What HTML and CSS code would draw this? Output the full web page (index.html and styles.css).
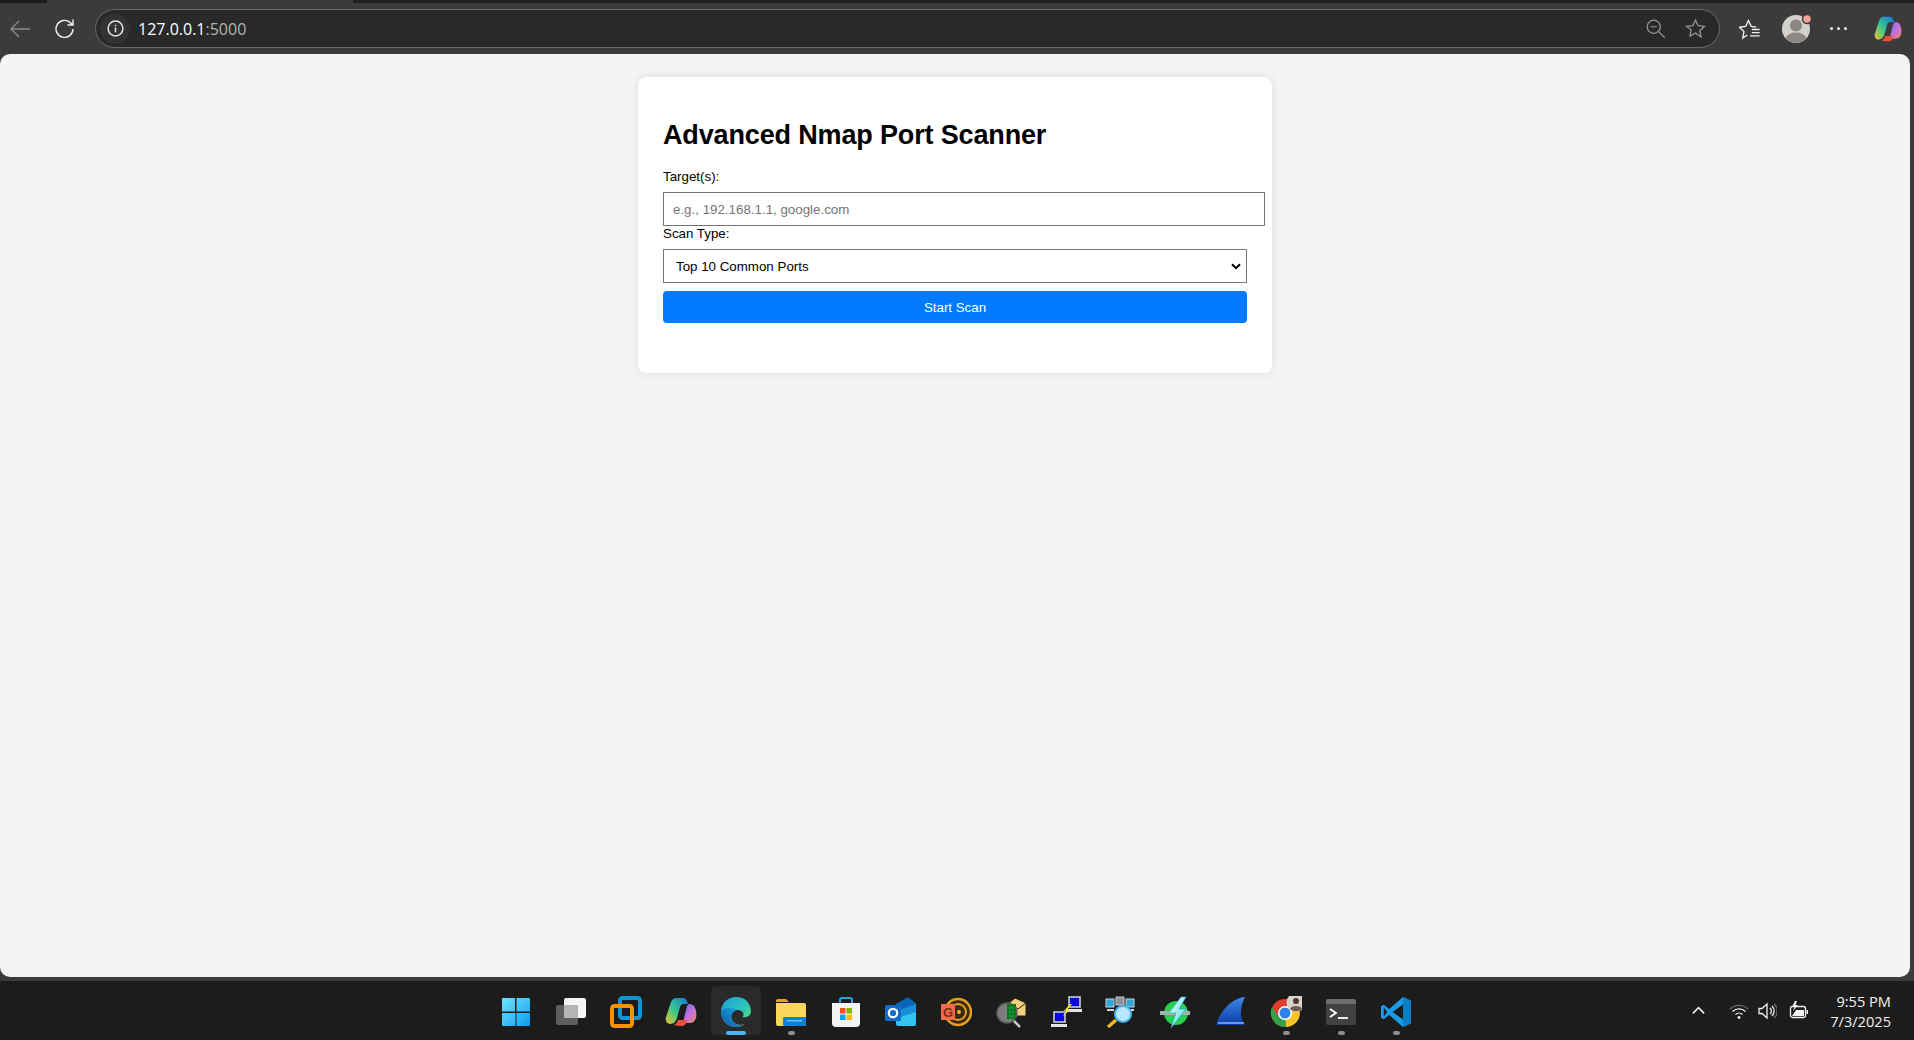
FILE: index.html
```html
<!DOCTYPE html>
<html lang="en">
<head>
  <meta charset="UTF-8">
  <title>Advanced Nmap Port Scanner</title>
  <link rel="stylesheet" href="styles.css">
</head>
<body>

  <div class="tabstrip"><div class="tab-edge"></div><div class="tab-active"></div></div>

  <div class="toolbar">
    <svg class="nav-icon back" viewBox="0 0 24 24"><path d="M22 12H3M11 4l-8 8 8 8"/></svg>
    <svg class="nav-icon reload" viewBox="0 0 24 24"><path d="M20 12a8.5 8.5 0 1 1-3-6.6L20 8M20 2.5V8h-5.5"/></svg>

    <div class="addressbar">
      <div class="info-pill">
        <svg class="info-icon" viewBox="0 0 20 20"><circle cx="10" cy="10" r="7.8"/><path d="M10 9v5M10 6v1.6"/></svg>
      </div>
      <span class="url"><span class="host">127.0.0.1</span>:5000</span>
      <svg class="bar-icon zoom-out" viewBox="0 0 24 24"><circle cx="10" cy="10" r="7.5"/><path d="M6.5 10h7M15.5 15.5l7 7"/></svg>
      <svg class="bar-icon star" viewBox="0 0 24 24"><path d="M12 2.2l3 6.6 7.2.8-5.3 4.9 1.4 7.1L12 17.1l-6.3 3.5 1.4-7.1L1.8 9.6 9 8.8z"/></svg>
    </div>

    <svg class="tool-icon favs" viewBox="0 0 24 24"><path d="M9 18.500l-4.800 3.300 1.200-7-5-4.700 6.900-1 3-6.300 3 6.300 5.500.8"/><path d="M14 12.500h8.500M14 16h8.500M12 19.500h10.500"/></svg>
    <svg class="avatar" viewBox="0 0 32 32">
      <circle cx="15" cy="16" r="14" fill="#d3d1cd"/>
      <circle cx="15" cy="12.500" r="6" fill="#8a8784"/>
      <path d="M4.500 25a11 8 0 0 1 21 0 14 14 0 0 1-21 0z" fill="#8a8784"/>
      <circle cx="26" cy="6" r="4.500" fill="#f4a19b" stroke="#3b3b3b" stroke-width="1.500"/>
    </svg>
    <div class="dots"><i></i><i></i><i></i></div>
    <svg class="copilot-top" viewBox="0 0 32 32">
      <defs>
        <linearGradient id="cpA" x1="0" y1="1" x2="1" y2="0"><stop offset="0" stop-color="#f5c02c"/><stop offset=".45" stop-color="#37c98a"/><stop offset="1" stop-color="#1a6fe0"/></linearGradient>
        <linearGradient id="cpB" x1="0" y1="0" x2="1" y2="1"><stop offset="0" stop-color="#5a6be8"/><stop offset=".5" stop-color="#c46fe0"/><stop offset="1" stop-color="#f08a5a"/></linearGradient>
      </defs>
      <path d="M11 2h7c2 0 3 1 4 3l1 3h-4c-2 0-3.500 1-4 3l-3 11c-.8 3-3 6-7 6H5c-3 0-5-3-4-7l4-12C6 5 8 2 11 2z" fill="url(#cpA)"/>
      <path d="M24 8c3 0 5 1 6 4 1 2 2 6 1 10-1 3-3 5-6 5h-4l-3-1 3-12c.5-2 1.500-6 3-6z" fill="url(#cpB)"/>
      <path d="M13 24h9l-1 3c-.5 2-2 3-4 3h-2c-3 0-6-1-6-1 2-1 3.500-3 4-5z" fill="#e8503a"/>
    </svg>
  </div>

  <div class="viewport">
    <div class="card">
      <h1>Advanced Nmap Port Scanner</h1>
      <form class="scan-form">
        <label for="targets">Target(s):</label>
        <input type="text" id="targets" placeholder="e.g., 192.168.1.1, google.com">
        <label for="scanType">Scan Type:</label>
        <div class="select-wrap">
          <select id="scanType">
            <option>Top 10 Common Ports</option>
          </select>
          <svg class="select-arrow" viewBox="0 0 10 7"><path d="M1 1.200l4 4 4-4"/></svg>
        </div>
        <button type="button">Start Scan</button>
      </form>
    </div>
  </div>

  <div class="taskbar">
    <div class="task-icons">

      <div class="slot">
        <svg class="app" viewBox="0 0 32 32">
          <defs><linearGradient id="winG" x1="0" y1="0" x2="1" y2="1"><stop offset="0" stop-color="#6fe6ff"/><stop offset="1" stop-color="#0f9bf0"/></linearGradient></defs>
          <path fill="url(#winG)" d="M2 3a1 1 0 0 1 1-1h12v13.500H2zM16.500 2H29a1 1 0 0 1 1 1v12.500H16.500zM2 17h13.500v13H3a1 1 0 0 1-1-1zM16.500 17H30v12a1 1 0 0 1-1 1H16.500z"/>
        </svg>
      </div>

      <div class="slot">
        <svg class="app" viewBox="0 0 32 32">
          <rect x="1" y="9" width="22" height="20" rx="2" fill="#5e5e5e"/>
          <rect x="9" y="2" width="22" height="20" rx="2" fill="#f4f4f4"/>
          <rect x="9" y="9" width="14" height="13" fill="#b5b5b5"/>
        </svg>
      </div>

      <div class="slot">
        <svg class="app" viewBox="0 0 32 32">
          <rect x="10" y="2" width="20" height="20" rx="2.500" fill="none" stroke="#0f95d6" stroke-width="4"/>
          <rect x="2" y="10" width="20" height="20" rx="2.500" fill="none" stroke="#f59200" stroke-width="4"/>
        </svg>
      </div>

      <div class="slot">
        <svg class="app" viewBox="0 0 32 32">
          <defs>
            <linearGradient id="cA" x1="0" y1="1" x2="1" y2="0"><stop offset="0" stop-color="#f5c02c"/><stop offset=".45" stop-color="#37c98a"/><stop offset="1" stop-color="#1a6fe0"/></linearGradient>
            <linearGradient id="cB" x1="0" y1="0" x2="1" y2="1"><stop offset="0" stop-color="#5a6be8"/><stop offset=".5" stop-color="#c46fe0"/><stop offset="1" stop-color="#f08a5a"/></linearGradient>
          </defs>
          <path d="M11 2h7c2 0 3 1 4 3l1 3h-4c-2 0-3.500 1-4 3l-3 11c-.8 3-3 6-7 6H5c-3 0-5-3-4-7l4-12C6 5 8 2 11 2z" fill="url(#cA)"/>
          <path d="M24 8c3 0 5 1 6 4 1 2 2 6 1 10-1 3-3 5-6 5h-4l-3-1 3-12c.5-2 1.500-6 3-6z" fill="url(#cB)"/>
          <path d="M13 24h9l-1 3c-.5 2-2 3-4 3h-2c-3 0-6-1-6-1 2-1 3.500-3 4-5z" fill="#e8503a"/>
        </svg>
      </div>

      <div class="slot active">
        <svg class="app" viewBox="0 0 32 32">
          <defs>
            <linearGradient id="edA" x1="0" y1="1" x2="1" y2="0"><stop offset="0" stop-color="#0c59a4"/><stop offset="1" stop-color="#1bb0e8"/></linearGradient>
            <linearGradient id="edB" x1="0" y1="0" x2="1" y2="1"><stop offset="0" stop-color="#1b9de2"/><stop offset=".6" stop-color="#30c9b0"/><stop offset="1" stop-color="#7bdc5a"/></linearGradient>
          </defs>
          <path d="M16 1C7 1 1 8 1 16c0 9 7 15 15 15 3 0 6-1 8-2.500-6 1.500-11-1-12.500-6-1-3 1-8 6-8.500 4 0 6 2.500 6 4.500 0 1-.5 2-1 2.500 2.500 1 8 0 8.500-5.500C31 7 25 1 16 1z" fill="url(#edB)"/>
          <path d="M1 16c0 9 7 15 15 15 3 0 6-1 8-2.500-6 1.500-11-1-12.500-6-1-3 1-8 6-8.500-6-3-16-3-16.500 2z" fill="url(#edA)"/>
        </svg>
        <span class="pill"></span>
      </div>

      <div class="slot">
        <svg class="app" viewBox="0 0 32 32">
          <path d="M1 5a2 2 0 0 1 2-2h8l3 3h-13z" fill="#e2a60e"/>
          <path d="M1 7h28a2 2 0 0 1 2 2v19a2 2 0 0 1-2 2H3a2 2 0 0 1-2-2z" fill="#fbd65a"/>
          <rect x="8" y="21" width="23" height="9" rx="1" fill="#0f7fd0"/>
          <rect x="12" y="24" width="15" height="1.500" fill="#6cc4f5"/>
        </svg>
        <span class="pill grey"></span>
      </div>

      <div class="slot">
        <svg class="app" viewBox="0 0 32 32">
          <path d="M10 8V4a2 2 0 0 1 2-2h8a2 2 0 0 1 2 2v4" fill="none" stroke="#2ba6de" stroke-width="2"/>
          <path d="M2 7h28v20a4 4 0 0 1-4 4H6a4 4 0 0 1-4-4z" fill="#f3f3f3"/>
          <rect x="10" y="12" width="5.500" height="5.500" fill="#f25022"/>
          <rect x="16.500" y="12" width="5.500" height="5.500" fill="#7fba00"/>
          <rect x="10" y="18.500" width="5.500" height="5.500" fill="#00a4ef"/>
          <rect x="16.500" y="18.500" width="5.500" height="5.500" fill="#ffb900"/>
        </svg>
      </div>

      <div class="slot">
        <svg class="app" viewBox="0 0 32 32">
          <path d="M11 8l10-6c2-.8 3-.5 4 .5l6 5v8H11z" fill="#0a64b8"/>
          <path d="M11 14h20v14a2 2 0 0 1-2 2H13a2 2 0 0 1-2-2z" fill="#34c3ee"/>
          <path d="M14 14l17-6v8l-15 5z" fill="#1690d8"/>
          <rect x="0" y="9" width="16" height="16" rx="1.500" fill="#0f6cc4"/>
          <circle cx="8" cy="17" r="4.200" fill="none" stroke="#fff" stroke-width="2.200"/>
        </svg>
      </div>

      <div class="slot">
        <svg class="app" viewBox="0 0 32 32">
          <circle cx="18" cy="16" r="13" fill="#3a2a10" stroke="#e6a11e" stroke-width="2.500"/>
          <circle cx="18" cy="16" r="8" fill="none" stroke="#e6a11e" stroke-width="2"/>
          <circle cx="19" cy="16" r="2" fill="#f4b53a"/>
          <rect x="1" y="8" width="14" height="16" fill="#f4694a"/>
          <text class="g-mark" x="8" y="21">G</text>
        </svg>
      </div>

      <div class="slot">
        <svg class="app" viewBox="0 0 32 32">
          <path d="M14 7l6-5 11 5v13l-17 0z" fill="#f2cf7a" stroke="#2a2010" stroke-width="1"/>
          <path d="M14 7l9 6 8-6" fill="none" stroke="#2a2010" stroke-width="1"/>
          <circle cx="12" cy="17" r="10" fill="#7c7c7c" stroke="#5c5c5c" stroke-width="1.500"/>
          <path d="M12 8h9v15H12z" fill="#0b6b1e"/>
          <path d="M15 8v15M18 8v15M12 12h9M12 16h9M12 20h9" stroke="#1aa02e" stroke-width="1"/>
          <path d="M19 25l6 6" stroke="#c8c8c8" stroke-width="2.500"/>
        </svg>
      </div>

      <div class="slot">
        <svg class="app" viewBox="0 0 32 32">
          <rect x="19" y="1" width="11" height="10" fill="#0a0ae0" stroke="#d5d8e0" stroke-width="1.500"/>
          <path d="M16 13h16v3H16z" fill="#e2e4ea"/>
          <rect x="4" y="16" width="11" height="10" fill="#0a0ae0" stroke="#d5d8e0" stroke-width="1.500"/>
          <path d="M1 28h16v3H1z" fill="#e2e4ea"/>
          <path d="M20 8l-6 7 3 0-5 6 8-7-3 0 5-6z" fill="#f7e51e"/>
        </svg>
      </div>

      <div class="slot">
        <svg class="app" viewBox="0 0 32 32">
          <rect x="1" y="3" width="8" height="8" fill="#2fa6d8" stroke="#c8d0d8"/>
          <rect x="11" y="1" width="8" height="8" fill="#8a9098" stroke="#c8d0d8"/>
          <rect x="21" y="3" width="8" height="8" fill="#2fa6d8" stroke="#c8d0d8"/>
          <path d="M2 14h7M12 12h6M22 14h7" stroke="#d0d4d8" stroke-width="2"/>
          <circle cx="18" cy="18" r="8" fill="#b6e8ff" stroke="#47b4ee" stroke-width="2"/>
          <path d="M11 24l-8 7" stroke="#f0b52a" stroke-width="3.500"/>
        </svg>
      </div>

      <div class="slot">
        <svg class="app" viewBox="0 0 32 32">
          <defs><linearGradient id="boltG" x1="0" y1="0" x2="1" y2="1"><stop offset="0" stop-color="#e8fff8"/><stop offset="1" stop-color="#55d8e8"/></linearGradient></defs>
          <circle cx="16" cy="17" r="12" fill="#25d04c"/>
          <path d="M0 15h30v4H0z" fill="#a8aeb0"/>
          <path d="M21 1L9 17h7l-5 15 15-19h-7l7-12z" fill="url(#boltG)" stroke="#1ca8d8" stroke-width=".6"/>
        </svg>
      </div>

      <div class="slot">
        <svg class="app" viewBox="0 0 32 32">
          <defs><linearGradient id="finG" x1="0" y1="0" x2="0" y2="1"><stop offset="0" stop-color="#3f8ae8"/><stop offset="1" stop-color="#0a3aa8"/></linearGradient></defs>
          <path d="M30 1C19 2 6 12 1 29h29c-6-8-5-18 0-28z" fill="url(#finG)"/>
          <path d="M3 27h26" stroke="#8ab8f0" stroke-width="1.500"/>
        </svg>
      </div>

      <div class="slot">
        <svg class="app" viewBox="0 0 32 32">
          <circle cx="15" cy="17" r="14" fill="#e33b2e"/>
          <path d="M15 17L3 24a14 14 0 0 0 13 7z" fill="#2fa24a"/>
          <path d="M3 24a14 14 0 0 1-1-13l7 10z" fill="#2fa24a"/>
          <path d="M15 10h13a14 14 0 0 1-12 21z" fill="#f6c42a"/>
          <circle cx="15" cy="17" r="7" fill="#fff"/>
          <circle cx="15" cy="17" r="5.500" fill="#2f7fe6"/>
          <circle cx="26" cy="6.500" r="9.500" fill="#d8d4cc"/>
          <circle cx="26" cy="5" r="3" fill="#4a3a30"/>
          <path d="M20 13c1-4 11-4 12 0a9 9 0 0 1-12 0z" fill="#6a5c50"/>
        </svg>
        <span class="pill grey"></span>
      </div>

      <div class="slot">
        <svg class="app" viewBox="0 0 32 32">
          <rect x="1" y="3" width="30" height="26" rx="2" fill="#414141"/>
          <path d="M1 5a2 2 0 0 1 2-2h26a2 2 0 0 1 2 2v3H1z" fill="#6d6d6d"/>
          <path d="M5 13l6 4-6 4" fill="none" stroke="#fff" stroke-width="1.800"/>
          <path d="M13 22h10" stroke="#fff" stroke-width="1.800"/>
        </svg>
        <span class="pill grey"></span>
      </div>

      <div class="slot">
        <svg class="app" viewBox="0 0 32 32">
          <path fill="#1a9be6" fill-rule="evenodd" d="M23 1l8 3.800v22.400L23 31 9.300 19 3.800 23.200 1 21.700V10.300l2.800-1.500L9.300 13zM23 8.600L12.600 16 23 23.400zM3.800 11.500v9L7.200 16z"/>
          <path fill="#0f7cc8" d="M23 1l8 3.800v22.400L23 31z"/>
        </svg>
        <span class="pill grey"></span>
      </div>

    </div>

    <div class="tray">
      <svg class="tray-icon chevron" viewBox="0 0 16 16"><path d="M2 11l6-6 6 6"/></svg>
      <svg class="tray-icon wifi" viewBox="0 0 20 20">
        <path class="faint" d="M1 8a13 13 0 0 1 18 0"/>
        <path d="M3.500 10.500a9.500 9.500 0 0 1 13 0M6.500 13.500a5 5 0 0 1 7 0"/>
        <circle class="solid" cx="10" cy="16.500" r="1.400"/>
      </svg>
      <svg class="tray-icon volume" viewBox="0 0 20 20">
        <path d="M2 7.500h3l5-4.500v14l-5-4.500H2z"/>
        <path d="M13 7a4 4 0 0 1 0 6M15 5a7 7 0 0 1 0 10"/>
        <path class="faint" d="M17.300 3a10 10 0 0 1 0 14"/>
      </svg>
      <svg class="tray-icon battery" viewBox="0 0 20 20">
        <rect x="1.500" y="5.500" width="15" height="11" rx="2"/>
        <path class="solid" d="M3 15l4-6h8v6z"/>
        <path class="solid" d="M17.500 9h1.500v4h-1.500z"/>
        <path class="solid" d="M6 0L3 6h2.500L4 10l5-6H6.500L8 0z"/>
      </svg>
      <div class="clock">
        <div>9:55 PM</div>
        <div>7/3/2025</div>
      </div>
    </div>
  </div>

</body>
</html>
```

FILE: styles.css
```css
* {
  box-sizing: border-box;
}

html, body {
  height: 100%;
}

body {
  margin: 0;
  height: 100vh;
  overflow: hidden;
  display: flex;
  flex-direction: column;
  background-color: #3b3b3b;
  font-family: "Liberation Sans", Arial, sans-serif;
}

/* browser chrome */
.tabstrip {
  height: 3px;
  display: flex;
  background-color: #1f1f1f;
}

.tab-edge {
  width: 47px;
  background-color: #1a1a1a;
}

.tab-active {
  width: 306px;
  background-color: #3b3b3b;
}

.toolbar {
  height: 51px;
  display: flex;
  align-items: center;
}

.nav-icon {
  width: 24px;
  height: 24px;
  fill: none;
  stroke-width: 1.4;
}

.back {
  margin-left: 8px;
  stroke: #8b8b8b;
}

.reload {
  margin-left: 21px;
  stroke: #f0f0f0;
}

.addressbar {
  width: 1625px;
  height: 39px;
  margin-left: 18px;
  display: flex;
  align-items: center;
  padding: 0 13px 0 4px;
  background-color: #292929;
  border: 1px solid #6b6b6b;
  border-radius: 20px;
}

.info-pill {
  width: 30px;
  height: 30px;
  display: flex;
  align-items: center;
  justify-content: center;
  border-radius: 50%;
  background-color: #333333;
}

.info-icon {
  width: 19px;
  height: 19px;
  fill: none;
  stroke: #e6e6e6;
  stroke-width: 1.6;
}

.url {
  margin-left: 8px;
  font-family: "Open Sans", sans-serif;
  font-size: 16px;
  color: #b5b5b5;
  flex: 1;
}

.host {
  color: #ffffff;
}

.bar-icon {
  width: 21px;
  height: 21px;
  fill: none;
  stroke: #9a9a9a;
  stroke-width: 1.4;
}

.star {
  margin-left: 19px;
}

.tool-icon {
  width: 22px;
  height: 22px;
  margin-left: 19px;
  fill: none;
  stroke: #f2f2f2;
  stroke-width: 1.5;
}

.avatar {
  width: 32px;
  height: 32px;
  margin-left: 20px;
}

.dots {
  display: flex;
  gap: 4px;
  margin-left: 17px;
}

.dots i {
  width: 3px;
  height: 3px;
  border-radius: 50%;
  background-color: #f0f0f0;
}

.copilot-top {
  width: 28px;
  height: 28px;
  margin-left: 27px;
}

/* the page itself */
.viewport {
  flex: 1;
  min-height: 0;
  margin: 0 4px 4px 0;
  padding-top: 23px;
  background-color: #f4f4f4;
  border-radius: 10px;
}

.card {
  width: 634px;
  height: 296px;
  margin: 0 auto;
  padding: 25px;
  background-color: white;
  border-radius: 8px;
  box-shadow: 0 0 10px rgba(0,0,0,0.1);
}

h1 {
  margin: 17px 0 18px;
  font-size: 27px;
  line-height: 32px;
  letter-spacing: -0.15px;
  color: black;
}

label {
  display: block;
  margin-bottom: 7px;
  font-size: 13.33px;
  line-height: 16px;
  color: black;
}

.scan-form input {
  display: block;
  width: 602px;
  height: 34px;
  padding: 8px 9px;
  border: 1px solid #767676;
  background: white;
  font-family: inherit;
  font-size: 13.33px;
  border-radius: 0;
}

.scan-form input::placeholder {
  color: #757575;
}

.select-wrap {
  position: relative;
}

.scan-form select {
  display: block;
  width: 100%;
  height: 34px;
  padding: 0 12px;
  appearance: none;
  border: 1px solid #767676;
  background-color: white;
  border-radius: 0;
  font-family: inherit;
  font-size: 13.33px;
  color: black;
}

.select-arrow {
  position: absolute;
  top: 14px;
  right: 6px;
  width: 10px;
  height: 7px;
  fill: none;
  stroke: black;
  stroke-width: 2;
  pointer-events: none;
}

.scan-form button {
  display: block;
  width: 100%;
  height: 32px;
  margin-top: 8px;
  background-color: #007bff;
  border: none;
  border-radius: 4px;
  color: white;
  font-family: inherit;
  font-size: 13.33px;
}

/* windows taskbar */
.taskbar {
  height: 59px;
  display: grid;
  grid-template-columns: 1fr auto 1fr;
  padding-right: 2px;
  background-color: #1c1c1c;
}

.task-icons {
  grid-column: 2;
  display: flex;
}

.slot {
  width: 55px;
  height: 59px;
  display: flex;
  flex-direction: column;
  align-items: center;
  padding-top: 15px;
  border-radius: 5px;
}

.slot.active {
  width: 50px;
  height: 49px;
  margin: 5px 2.500px 0;
  padding-top: 10px;
  background-color: #2a2a2a;
}

.app {
  width: 32px;
  height: 32px;
  flex-shrink: 0;
}

.g-mark {
  font-family: "Liberation Sans", sans-serif;
  font-size: 13px;
  font-weight: bold;
  text-anchor: middle;
  fill: #7a2a14;
}

.pill {
  width: 20px;
  height: 4px;
  margin-top: 3px;
  border-radius: 2px;
  background-color: #47b8f5;
}

.pill.grey {
  width: 7px;
  background-color: #8e8e8e;
}

.tray {
  grid-column: 3;
  justify-self: end;
  display: flex;
  align-items: center;
  padding-right: 21px;
}

.tray-icon {
  width: 20px;
  height: 20px;
  fill: none;
  stroke: #f2f2f2;
  stroke-width: 1.3;
}

.tray-icon .faint {
  stroke: #6a6a6a;
}

.tray-icon .solid {
  fill: #f2f2f2;
  stroke: none;
}

.chevron {
  width: 15px;
  height: 15px;
  stroke-width: 1.7;
}

.wifi {
  margin-left: 23px;
}

.volume {
  margin-left: 8px;
}

.battery {
  margin-left: 12px;
}

.clock {
  width: 82px;
  text-align: right;
  font-family: "Open Sans", sans-serif;
  font-size: 14.6px;
  line-height: 20px;
  color: #f2f2f2;
}
```
